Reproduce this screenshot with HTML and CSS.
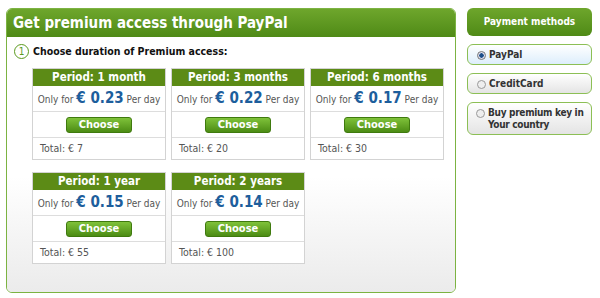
FILE: index.html
```html
<!DOCTYPE html>
<html lang="en">
<head>
<meta charset="UTF-8" />
<title>Premium access</title>
<link rel="stylesheet" href="styles.css">
</head>
<body>
  <div class="page">
    <div class="main">
      <div class="main-head">Get premium access through PayPal</div>
      <div class="main-body">
        <div class="step"><span class="step-num">1</span> Choose duration of Premium access:</div>

        <div class="cards">
          <div class="card">
            <div class="card-head">Period: 1 month</div>
            <div class="card-price">Only for <b>€ 0.23</b> Per day</div>
            <div class="card-btn"><button class="choose">Choose</button></div>
            <div class="card-total">Total: € 7</div>
          </div>
          <div class="card">
            <div class="card-head">Period: 3 months</div>
            <div class="card-price">Only for <b>€ 0.22</b> Per day</div>
            <div class="card-btn"><button class="choose">Choose</button></div>
            <div class="card-total">Total: € 20</div>
          </div>
          <div class="card">
            <div class="card-head">Period: 6 months</div>
            <div class="card-price">Only for <b>€ 0.17</b> Per day</div>
            <div class="card-btn"><button class="choose">Choose</button></div>
            <div class="card-total">Total: € 30</div>
          </div>
          <div class="card">
            <div class="card-head">Period: 1 year</div>
            <div class="card-price">Only for <b>€ 0.15</b> Per day</div>
            <div class="card-btn"><button class="choose">Choose</button></div>
            <div class="card-total">Total: € 55</div>
          </div>
          <div class="card">
            <div class="card-head">Period: 2 years</div>
            <div class="card-price">Only for <b>€ 0.14</b> Per day</div>
            <div class="card-btn"><button class="choose">Choose</button></div>
            <div class="card-total">Total: € 100</div>
          </div>
        </div>
      </div>
    </div>

    <div class="side">
      <div class="side-head">Payment methods</div>
      <label class="method active"><span class="radio checked"></span>PayPal</label>
      <label class="method"><span class="radio"></span>CreditCard</label>
      <label class="method long"><span class="radio"></span><span>Buy premium key in<br>Your country</span></label>
    </div>
  </div>
</body>
</html>
```

FILE: styles.css
```css
body {
  margin: 0;
  background: #fff;
  font-family: "DejaVu Sans Condensed", "DejaVu Sans", sans-serif;
  font-size: 10px;
  color: #222;
}
.page {
  display: flex;
  align-items: flex-start;
  padding: 8px 0 0 6px;
  gap: 11px;
}
.main {
  width: 450px;
  height: 285px;
  box-sizing: border-box;
  border: 1px solid #7cb342;
  border-radius: 6px;
  overflow: hidden;
  display: flex;
  flex-direction: column;
}
.main-head {
  height: 28px;
  line-height: 28px;
  padding-left: 6px;
  background: linear-gradient(#6ea62c, #4f8a16);
  color: #fff;
  font-weight: bold;
  font-size: 15px;
}
.main-body {
  flex: 1;
  background: linear-gradient(#fff 55%, #ebebeb);
  padding: 7px 0 0 7px;
}
.step {
  display: flex;
  align-items: center;
  font-weight: bold;
  font-size: 10.5px;
  color: #111;
  height: 14px;
}
.step-num {
  width: 13px;
  height: 13px;
  border: 1px solid #5a9a1e;
  border-radius: 50%;
  color: #5a9a1e;
  font-size: 10px;
  font-weight: normal;
  display: flex;
  align-items: center;
  justify-content: center;
  margin-right: 4px;
}
.cards {
  display: grid;
  grid-template-columns: repeat(3, 134px);
  column-gap: 5px;
  row-gap: 12px;
  margin: 10px 0 0 18px;
}
.card {
  border: 1px solid #d3d3d3;
  background: #fff;
}
.card-head {
  height: 17px;
  line-height: 17px;
  background: #5c8b16;
  color: #fff;
  font-weight: bold;
  font-size: 11.5px;
  text-align: center;
}
.card-price {
  height: 25px;
  line-height: 25px;
  text-align: center;
  white-space: nowrap;
  color: #555;
  font-size: 10px;
  border-bottom: 1px solid #ddd;
}
.card-price b {
  color: #1d5e9c;
  font-size: 15px;
}
.card-btn {
  height: 25px;
  display: flex;
  align-items: center;
  justify-content: center;
  border-bottom: 1px solid #ddd;
}
.choose {
  width: 66px;
  height: 16px;
  padding: 0;
  border: 1px solid #3f7a0e;
  border-radius: 3px;
  background: linear-gradient(#7fc23a, #4c8c14);
  color: #fff;
  font-family: inherit;
  font-weight: bold;
  font-size: 11px;
  line-height: 14px;
}
.card-total {
  height: 21px;
  line-height: 21px;
  padding-left: 7px;
  color: #555;
  font-size: 10.5px;
}
.side {
  width: 125px;
  display: flex;
  flex-direction: column;
  gap: 8px;
}
.side-head {
  height: 28px;
  line-height: 28px;
  border-radius: 6px;
  background: linear-gradient(#6ea62c, #4f8a16);
  color: #fff;
  font-weight: bold;
  text-align: center;
}
.method {
  display: flex;
  align-items: flex-start;
  min-height: 20px;
  box-sizing: border-box;
  padding: 4px 0 3px 9px;
  border: 1px solid #8cbf55;
  border-radius: 6px;
  background: linear-gradient(#fff, #e4e4e4);
  color: #333;
  font-weight: bold;
  line-height: 12px;
  white-space: nowrap;
}
.method.long {
  padding-left: 8px;
  letter-spacing: -0.3px;
}
.method.active {
  background: linear-gradient(#fff, #ddeefc);
}
.radio {
  flex: none;
  width: 7px;
  height: 7px;
  margin: 2px 3px 0 0;
  border: 1px solid #999;
  border-radius: 50%;
  background: #eee;
}
.radio.checked {
  background: radial-gradient(#1d4f8a 40%, #dde 50%);
  border-color: #777;
}
```
